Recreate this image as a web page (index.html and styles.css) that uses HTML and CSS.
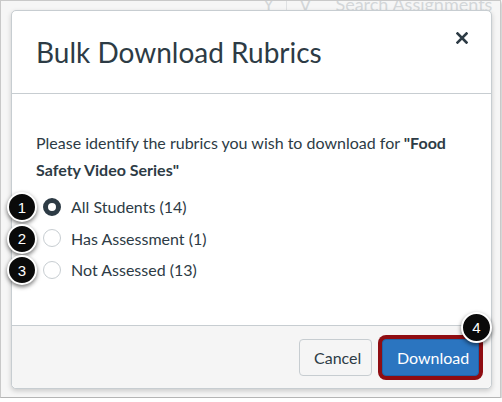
FILE: index.html
```html
<!DOCTYPE html>
<html>
<head>
<meta charset="utf-8">
<link rel="stylesheet" href="styles.css">
</head>
<body>
<div class="frame">
  <div class="bg-search">
    <span class="bg-icon">Y</span><span class="bg-sep"></span><span class="bg-icon">V</span>
    <span class="bg-text">Search Assignments</span>
  </div>
  <div class="modal">
    <div class="modal-header">
      <h1 class="title">Bulk Download Rubrics</h1>
      <button class="close" aria-label="Close">
        <svg width="12" height="12" viewBox="0 0 12 12"><path d="M1.5 1.5 L10.5 10.5 M10.5 1.5 L1.5 10.5" stroke="#2d3b45" stroke-width="2.6" stroke-linecap="square"/></svg>
      </button>
    </div>
    <div class="modal-body">
      <p class="intro">Please identify the rubrics you wish to download for <b>"Food Safety Video Series"</b></p>
      <div class="options">
        <label class="option"><span class="badge">1</span><span class="radio checked"></span><span class="label">All Students (14)</span></label>
        <label class="option"><span class="badge">2</span><span class="radio"></span><span class="label">Has Assessment (1)</span></label>
        <label class="option"><span class="badge">3</span><span class="radio"></span><span class="label">Not Assessed (13)</span></label>
      </div>
    </div>
    <div class="modal-footer">
      <button class="btn btn-cancel">Cancel</button>
      <button class="btn btn-primary">Download<span class="badge badge-4">4</span></button>
    </div>
  </div>
</div>
</body>
</html>
```
FILE: styles.css
```css
* { box-sizing: border-box; }
html, body { margin: 0; padding: 0; background: #ffffff; }
body { font-family: Lato, "Open Sans", "Liberation Sans", sans-serif; color: #2d3b45; }

.frame {
  position: relative;
  width: 501px;
  height: 398px;
  border: 1px solid #c9c9c9;
  border-bottom-color: #b5b5b5;
  background: #f6f6f6;
  box-shadow: 1px 2px 3px rgba(0,0,0,0.25);
  padding: 9px 0 0 10px;
  overflow: hidden;
}

.bg-search {
  position: absolute;
  top: -8px;
  left: 262px;
  display: flex;
  align-items: center;
  gap: 12px;
  color: #d3d6d9;
  font-size: 18px;
}
.bg-sep { width: 1px; height: 18px; background: #dfe1e3; }
.bg-text { margin-left: 12px; }

.modal {
  position: relative;
  width: 481px;
  height: 379px;
  background: #ffffff;
  border: 1px solid #c7cdd1;
  border-radius: 5px;
  box-shadow: 0 2px 5px rgba(0,0,0,0.18);
  display: flex;
  flex-direction: column;
}

.modal-header {
  height: 83px;
  border-bottom: 1px solid #c7cdd1;
  display: flex;
  align-items: center;
  padding: 0 24px;
  position: relative;
}
.title {
  margin: 0;
  font-weight: 400;
  font-size: 28px;
  line-height: 1;
  color: #2d3b45;
}
.close {
  position: absolute;
  top: 21px;
  right: 23px;
  width: 12px;
  height: 12px;
  padding: 0;
  border: 0;
  background: none;
  display: flex;
}

.modal-body {
  flex: 1;
  padding: 35px 24px 0 24px;
}
.intro {
  margin: 0 0 8px 0;
  font-size: 16px;
  line-height: 27px;
  color: #2d3b45;
}
.intro b { font-weight: 700; }

.options { display: flex; flex-direction: column; padding-left: 7px; }
.option {
  position: relative;
  display: flex;
  align-items: center;
  height: 31.5px;
  font-size: 16px;
}
.radio {
  width: 18px;
  height: 18px;
  border-radius: 50%;
  border: 1px solid #c7cdd1;
  background: #fff;
  margin-right: 10px;
  flex: none;
}
.radio.checked { border: 5.5px solid #2d3b45; }
.label { color: #2d3b45; }

.badge {
  position: absolute;
  width: 30px;
  height: 30px;
  border-radius: 50%;
  background: #0a0a0a;
  border: 2px solid #ffffff;
  box-shadow: 0 2px 4px rgba(0,0,0,0.55);
  color: #fff;
  font-family: "Liberation Sans", Arial, sans-serif;
  font-size: 15px;
  display: flex;
  align-items: center;
  justify-content: center;
}
.option .badge { left: -36px; top: 1px; }

.modal-footer {
  height: 63px;
  border-top: 1px solid #c7cdd1;
  background: #f5f5f5;
  border-radius: 0 0 5px 5px;
  display: flex;
  align-items: center;
  justify-content: flex-end;
  padding: 0 12px;
  gap: 10px;
}
.btn {
  height: 37px;
  font-family: Lato, "Open Sans", "Liberation Sans", sans-serif;
  font-size: 16px;
  border-radius: 4px;
  padding: 0 14px;
  cursor: pointer;
}
.btn-cancel {
  background: #f5f5f5;
  border: 1px solid #c7cdd1;
  color: #2d3b45;
  width: 73px;
}
.btn-primary {
  position: relative;
  width: 97px;
  background: #2b75c0;
  border: 1px solid #1f64a9;
  color: #ffffff;
  box-shadow: 0 0 0 4px #8f0d12;
  border-radius: 4px;
}
.badge-4 { right: -14px; top: -28px; width: 31px; height: 31px; }
```
